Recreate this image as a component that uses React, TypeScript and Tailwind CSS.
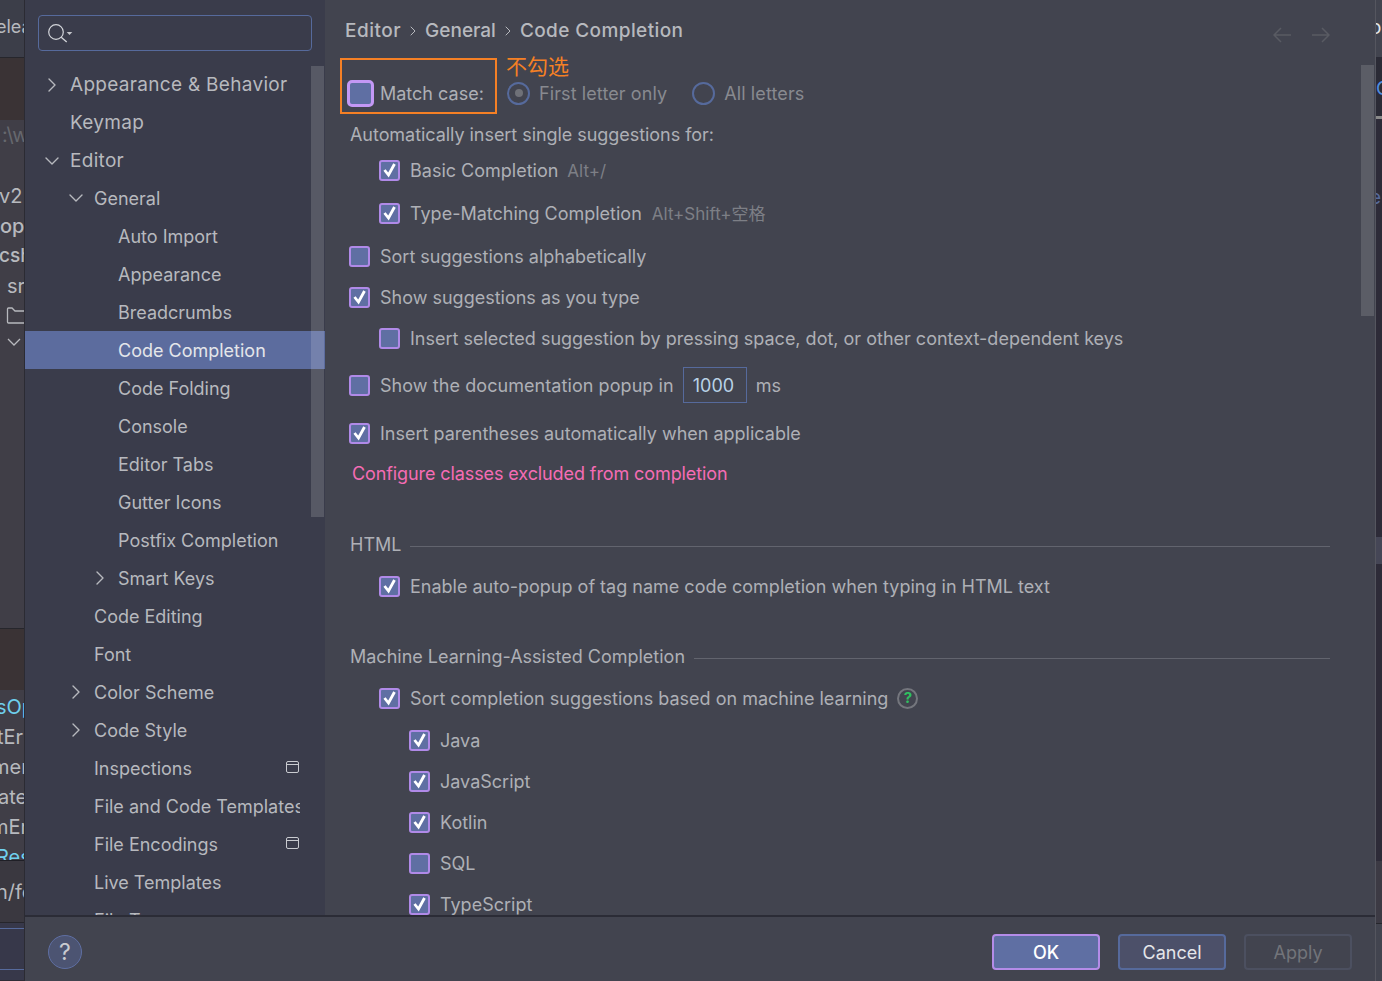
import React from 'react';
import { ChevronDown, ChevronRight } from 'lucide-react';

type NavItem = {
  label: string;
  level: 0 | 1 | 2;
  arrow?: 'right' | 'down';
  selected?: boolean;
  project?: boolean;
  clipped?: boolean;
};

const navItems: NavItem[] = [
  { label: 'Appearance & Behavior', level: 0, arrow: 'right' },
  { label: 'Keymap', level: 0 },
  { label: 'Editor', level: 0, arrow: 'down' },
  { label: 'General', level: 1, arrow: 'down' },
  { label: 'Auto Import', level: 2 },
  { label: 'Appearance', level: 2 },
  { label: 'Breadcrumbs', level: 2 },
  { label: 'Code Completion', level: 2, selected: true },
  { label: 'Code Folding', level: 2 },
  { label: 'Console', level: 2 },
  { label: 'Editor Tabs', level: 2 },
  { label: 'Gutter Icons', level: 2 },
  { label: 'Postfix Completion', level: 2 },
  { label: 'Smart Keys', level: 2, arrow: 'right' },
  { label: 'Code Editing', level: 1 },
  { label: 'Font', level: 1 },
  { label: 'Color Scheme', level: 1, arrow: 'right' },
  { label: 'Code Style', level: 1, arrow: 'right' },
  { label: 'Inspections', level: 1, project: true },
  { label: 'File and Code Templates', level: 1, clipped: true },
  { label: 'File Encodings', level: 1, project: true },
  { label: 'Live Templates', level: 1 },
  { label: 'File Types', level: 1 },
];

function Check({ on = true, big = false }: { on?: boolean; big?: boolean }) {
  return (
    <span
      className={
        big
          ? 'flex w-[27px] h-[27px] shrink-0 items-center justify-center rounded-[5px] bg-[#5f6fa3] border-[3px] border-[#c398f5]'
          : 'flex w-[21px] h-[21px] shrink-0 items-center justify-center rounded-[3px] bg-[#5f6fa3] border-2 border-[#b08ae8]'
      }
    >
      {on && (
        <svg width="17" height="17" viewBox="0 0 17 17" fill="none">
          <path d="M3.5 8l4 5L13.5 2" stroke="#fff" strokeWidth="2.8" />
        </svg>
      )}
    </span>
  );
}

function Row({ label, on = true, className = '' }: { label: string; on?: boolean; className?: string }) {
  return (
    <div className={`flex items-center gap-[10px] ${className}`}>
      <Check on={on} />
      <span>{label}</span>
    </div>
  );
}

function Radio({ dot = false }: { dot?: boolean }) {
  return (
    <span className="flex w-[23px] h-[23px] shrink-0 items-center justify-center rounded-full border-2 border-[#566a9c]">
      {dot && <span className="w-[8px] h-[8px] rounded-full bg-[#6f7178]" />}
    </span>
  );
}

function Sidebar() {
  return (
    <div className="relative flex w-[300px] shrink-0 flex-col overflow-hidden bg-[#3a3c4b]">
      <div className="h-[65px] shrink-0 pl-[13px] pt-[15px]">
        <div className="flex h-[36px] w-[274px] items-center rounded-[4px] border border-[#566a9c] pl-[9px]">
          <svg width="26" height="24" viewBox="0 0 26 24" fill="none">
            <circle cx="8" cy="11" r="7.3" stroke="#d3d5da" strokeWidth="1.2" />
            <path d="M13.2 16.2l5.5 4.8" stroke="#d3d5da" strokeWidth="1.3" />
            <path d="M18.7 11h5.6l-2.8 3z" fill="#c3c5ca" />
          </svg>
        </div>
      </div>
      <div className="min-h-0 flex-1 overflow-hidden">
        {navItems.map((item) => (
          <div
            key={item.label}
            className={`relative flex h-[38px] w-[300px] items-center ${item.selected ? 'bg-[#5c6c9e] text-[#e4e6ea]' : 'text-[#b7b9be]'} ${item.level === 0 ? 'pl-[45px] pt-[2px] text-[19px] tracking-[0.3px]' : item.level === 1 ? 'pl-[69px]' : 'pl-[93px]'}`}
          >
            {item.arrow === 'right' && (
              <ChevronRight className="absolute -ml-[30px] text-[#b7b9be]" size={24} strokeWidth={1.4} />
            )}
            {item.arrow === 'down' && (
              <ChevronDown className="absolute -ml-[30px] text-[#b7b9be]" size={24} strokeWidth={1.4} />
            )}
            <span className={item.clipped ? 'block w-[206px] overflow-hidden whitespace-nowrap' : ''}>{item.label}</span>
            {item.project && (
              <span className="absolute left-[261px] top-[12px] h-[12px] w-[13px] rounded-[2px] border border-[#c9cbd0]">
                <span className="block h-[3px] border-b border-[#c9cbd0]" />
              </span>
            )}
          </div>
        ))}
      </div>
      <div className="absolute right-[1px] top-[66px] h-[451px] w-[13px] bg-white/15" />
    </div>
  );
}

function SectionTitle({ label, className = '' }: { label: string; className?: string }) {
  return (
    <div className={`flex items-center gap-[9px] ${className}`}>
      <span>{label}</span>
      <span className="mt-[4px] h-px flex-1 bg-[#62646e]" />
    </div>
  );
}

function Settings() {
  return (
    <div className="relative min-w-0 flex-1 overflow-hidden text-[#aeb0b6]">
      <div className="flex h-[58px] items-center pl-[20px] pr-[45px] pt-[4px]">
        <div className="flex items-center text-[19px] font-medium text-[#b7b9be]">
          <span className="tracking-[0.5px]">Editor</span>
          <ChevronRight className="mx-[4px] text-[#b7b9be]" size={16} strokeWidth={1.5} />
          <span>General</span>
          <ChevronRight className="mx-[4px] text-[#b7b9be]" size={16} strokeWidth={1.5} />
          <span className="tracking-[0.4px]">Code Completion</span>
        </div>
        <div className="ml-auto flex gap-[21px] pt-[8px] text-[#595b63]">
          <svg width="18" height="16" viewBox="0 0 18 16" fill="none" stroke="currentColor" strokeWidth="1.5">
            <path d="M18 8H1M8 1L1 8l7 7" />
          </svg>
          <svg width="18" height="16" viewBox="0 0 18 16" fill="none" stroke="currentColor" strokeWidth="1.5">
            <path d="M0 8h17M10 1l7 7-7 7" />
          </svg>
        </div>
      </div>

      <div className="absolute right-[1px] top-[65px] h-[251px] w-[13px] bg-[#5b5d66]" />

      <div className="pl-[15px]">
        <div className="flex h-[56px] items-center">
          <div className="flex h-[56px] w-[157px] items-center gap-[6px] border-2 border-[#f58025] pl-[5px] pt-[14px]">
            <Check on={false} big />
            <span className="text-[18px]">Match case:</span>
          </div>
          <div className="relative flex items-center pl-[10px] pt-[14px] tracking-[0.1px] text-[#888a90]">
            <span className="absolute left-[9px] -top-[15px] text-[21px] tracking-normal text-[#f58025]">不勾选</span>
            <Radio dot />
            <span className="ml-[9px]">First letter only</span>
            <span className="w-[25px]" />
            <Radio />
            <span className="ml-[9px]">All letters</span>
          </div>
        </div>
        <div className="ml-[10px] mt-[7px] h-[28px] leading-[28px] tracking-[-0.05px]">Automatically insert single suggestions for:</div>
        <div className="mt-[7px] flex h-[28px] items-center gap-[10px] pl-[39px]">
          <Check />
          <span>Basic Completion</span>
          <span className="-ml-[1px] mt-[4px] text-[17px] text-[#7d7f86]">Alt+/</span>
        </div>
        <div className="mt-[15px] flex h-[28px] items-center gap-[10px] pl-[39px]">
          <Check />
          <span>Type-Matching Completion</span>
          <span className="mt-[4px] text-[17px] text-[#7d7f86]">Alt+Shift+空格</span>
        </div>
        <Row className="mt-[15px] h-[28px] pl-[9px]" label="Sort suggestions alphabetically" on={false} />
        <Row className="mt-[13px] h-[28px] pl-[9px]" label="Show suggestions as you type" />
        <Row className="mt-[13px] h-[28px] pl-[39px]" label="Insert selected suggestion by pressing space, dot, or other context-dependent keys" on={false} />
        <div className="mt-[15px] flex h-[36px] items-center pl-[9px]">
          <Check on={false} />
          <span className="ml-[10px] tracking-[0.07px]">Show the documentation popup in</span>
          <span className="ml-[9px] flex h-[36px] w-[64px] items-center border border-[#566a9c] pl-[9px] text-[#b9d2e6]">1000</span>
          <span className="ml-[9px]">ms</span>
        </div>
        <Row className="mt-[16px] h-[28px] pl-[9px]" label="Insert parentheses automatically when applicable" />
        <div className="ml-[12px] mt-[13px] h-[28px] leading-[28px] tracking-[-0.1px] text-[#f56cb4]">Configure classes excluded from completion</div>

        <SectionTitle label="HTML" className="ml-[10px] mr-[45px] mt-[42px] h-[28px]" />
        <Row className="mt-[14px] h-[28px] pl-[39px]" label="Enable auto-popup of tag name code completion when typing in HTML text" />

        <SectionTitle label="Machine Learning-Assisted Completion" className="ml-[10px] mr-[45px] mt-[42px] h-[28px]" />
        <div className="mt-[14px] flex h-[28px] items-center gap-[10px] pl-[39px]">
          <Check />
          <span>Sort completion suggestions based on machine learning</span>
          <span className="-ml-[1px] flex h-[21px] w-[21px] items-center justify-center rounded-full border-2 border-[#74767d] text-[15px] font-bold text-[#2fc060]">?</span>
        </div>
        <Row className="mt-[14px] h-[28px] pl-[69px]" label="Java" />
        <Row className="mt-[13px] h-[28px] pl-[69px]" label="JavaScript" />
        <Row className="mt-[13px] h-[28px] pl-[69px]" label="Kotlin" />
        <Row className="mt-[13px] h-[28px] pl-[69px]" label="SQL" on={false} />
        <Row className="mt-[13px] h-[28px] pl-[69px]" label="TypeScript" />
      </div>
    </div>
  );
}

// the editor that shows behind the dialog, left of it
function LeftStrip() {
  return (
    <div className="w-[24px] shrink-0 overflow-hidden text-[20px] leading-[30px] whitespace-nowrap text-[#b7b9be]">
      <div className="h-[58px] border-b border-[#26262c] bg-[#3c3e49] pt-[12px] text-[18px]"><div className="-ml-[4px]">elea</div></div>
      <div className="h-[62px] bg-[#3a3335]" />
      <div className="h-[508px] bg-[#403e47]">
        <div className="h-[61px] pl-[2px] text-[#66686e]">:\w</div>
        <div className="h-[30px] -ml-[1px]">v2</div>
        <div className="h-[30px] font-medium">op,</div>
        <div className="h-[30px] -ml-[1px] text-[19px] font-medium">csh</div>
        <div className="h-[36px] pl-[7px]">sr</div>
        <svg width="24" height="18" viewBox="0 0 24 18" fill="none" stroke="#b7b9be" strokeWidth="1.3">
          <path d="M24 4H15L12 1H8.5Q7.5 1 7.5 2V15Q7.5 16 8.5 16H24" />
        </svg>
        <svg className="mt-[12px]" width="24" height="10" viewBox="0 0 24 10" fill="none" stroke="#b7b9be" strokeWidth="1.3">
          <path d="M8 2l6 6 6-6" />
        </svg>
      </div>
      <div className="h-[62px] border-t border-[#26262c] bg-[#3a3335]" />
      <div className="h-[170px] overflow-hidden bg-[#403e47] pt-[2px]">
        <div className="h-[30px] -ml-[4px] text-[#6fd0ee]">sOp</div>
        <div className="h-[30px] -ml-[3px]">tEr</div>
        <div className="h-[30px] -ml-[8px]">mer</div>
        <div className="h-[30px] -ml-[2px]">ate</div>
        <div className="h-[30px] -ml-[9px]">mEr</div>
        <div className="h-[30px] -ml-[4px] text-[#6fd0ee]">Res</div>
      </div>
      <div className="flex h-[62px] items-center border-t border-[#1f1f26] bg-[#3a3840] -ml-[4px]">n/fe</div>
      <div className="h-[58px] border-t border-[#26262c] bg-[#37384a] pt-[5px]">
        <div className="h-px bg-[#566a9c]" />
        <div className="mt-[40px] h-px bg-[#566a9c]" />
      </div>
    </div>
  );
}

function RightStrip() {
  return (
    <div className="w-[6px] shrink-0 overflow-hidden text-[19px] leading-[30px] whitespace-nowrap">
      <div className="h-[57px] bg-[#42444f] pt-[13px] text-[#e4e6ea]"><div className="-ml-[6px]">o</div></div>
      <div className="h-[59px] bg-[#2b2b36] pt-[17px] text-[#4f8ee0]">C</div>
      <div className="h-[3px] bg-[#8a8a8a]" />
      <div className="h-[418px] bg-[#2d2b38] pt-[64px] text-[#566a9c]"><div className="-ml-[6px]">e</div></div>
      <div className="h-[27px] bg-[#454656]" />
      <div className="h-[297px] bg-[#2d2b38]" />
      <div className="h-[62px] bg-[#3c3a44]" />
      <div className="h-[58px] border-t border-[#26262c] bg-[#42444f]" />
    </div>
  );
}

export default function App() {
  return (
    <div className="flex h-[981px] w-[1382px] overflow-hidden bg-[#2e2c36] font-['Inter','Noto_Sans_CJK_SC',sans-serif] text-[18px]">
      <LeftStrip />
      <div className="flex min-w-0 flex-1 flex-col border-x border-x-[#55565f] border-l-[#2b2b33] bg-[#42444f]">
        <div className="flex min-h-0 flex-1 border-b-2 border-[#2b2c36]">
          <Sidebar />
          <Settings />
        </div>
        <div className="flex h-[64px] shrink-0 items-center pl-[23px] pr-[23px] pt-[6px]">
          <span className="flex h-[34px] w-[34px] items-center justify-center rounded-full border border-[#5f6fa3] bg-[#4c5472] text-[23px] text-[#c9cbd0]">?</span>
          <div className="ml-auto flex gap-[18px] text-[18px]">
            <button className="h-[36px] w-[108px] rounded-[4px] border-2 border-[#b48ce8] bg-[#5f6fa3] font-medium text-white">OK</button>
            <button className="h-[36px] w-[108px] rounded-[4px] border-2 border-[#566a9c] bg-[#4c5069] text-[#e4e6ea]">Cancel</button>
            <button className="h-[36px] w-[108px] rounded-[4px] border-2 border-[#4c5060] text-[#72747a]">Apply</button>
          </div>
        </div>
      </div>
      <RightStrip />
    </div>
  );
}
